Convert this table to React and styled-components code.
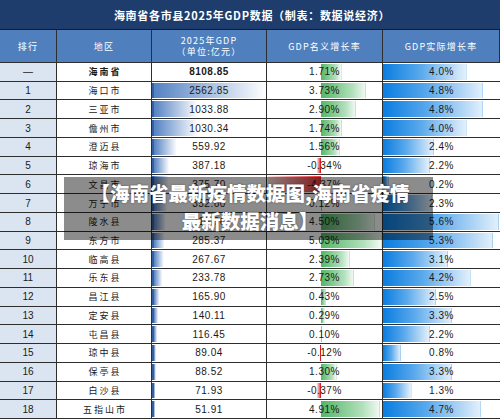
import React from 'react';
import styled, { createGlobalStyle } from 'styled-components';

const Global = createGlobalStyle`
  html, body { margin: 0; padding: 0; background: #fff; }
  body { width: 500px; height: 419px; overflow: hidden; font-family: "Noto Sans CJK SC", sans-serif; }
`;

const Page = styled.div`
  position: relative;
  width: 500px;
  height: 419px;
  overflow: hidden;
  display: flex;
  flex-direction: column;
`;

const TitleBar = styled.div`
  height: 30px;
  box-sizing: border-box;
  border-bottom: 1px solid #1b1b1b;
  background: #1f3d6c;
  color: #fff;
  display: flex;
  align-items: center;
  justify-content: center;
  font-size: 11px;
  font-weight: 700;
  letter-spacing: 0.7px;
  padding-left: 4px;
`;

const Table = styled.div`
  flex: 1;
  display: grid;
  grid-template-columns: 57px 95px 115px 116px 117px;
  grid-template-rows: 33px repeat(19, 1fr);
`;

const BaseCell = styled.div`
  box-sizing: border-box;
  border-right: 1px solid #2e2e2e;
  border-bottom: 1px solid #2e2e2e;
  display: flex;
  flex-direction: column;
  align-items: center;
  justify-content: center;
  min-width: 0;
  overflow: hidden;
  white-space: nowrap;
`;

const HeadCell = styled(BaseCell)`
  background: #4f80bd;
  color: #fff;
  font-size: 9px;
  letter-spacing: 1.2px;
  line-height: 11px;
`;

const RankCell = styled(BaseCell)`
  background: #dbe5f1;
  color: #1a1a1a;
  font-family: "Liberation Sans", sans-serif;
  font-size: 10px;
`;

const NameCell = styled(BaseCell)`
  background: #fff;
  color: #1a1a1a;
  font-size: 9px;
  letter-spacing: 2px;
  padding-left: 2px;
  font-weight: ${p => (p.$bold ? 700 : 400)};
`;

const NumCell = styled(BaseCell)`
  background-color: #fff;
  background-repeat: no-repeat;
  color: #1a1a1a;
  font-family: "Liberation Sans", sans-serif;
  font-size: 10px;
  letter-spacing: 0.5px;
  font-weight: ${p => (p.$bold ? 700 : 400)};
`;

const GdpCell = styled(NumCell)`
  background-image: linear-gradient(to right, #34609f 0, #34609f 2px, #5482c3 2px, #ffffff 100%);
  background-size: ${p => p.$w}px calc(100% - 2px);
  background-position: 0 center;
`;

const NomCell = styled(NumCell)`
  background-image: ${p =>
    p.$neg
      ? 'linear-gradient(to left, #d41c22 0, #d41c22 1px, #ea3a3e 1px, #fde3e3 100%)'
      : 'linear-gradient(to right, #52b665 0, #b3e0bc 70%, #f0f9f2 calc(100% - 1px), #c5e6cb calc(100% - 1px))'};
  background-size: ${p => p.$w}px calc(100% - 2px);
  background-position: ${p => p.$x}px center;
`;

const RealCell = styled(NumCell)`
  border-right: none;
  background-image: linear-gradient(to right, #0a7ddf 0, #5aa9ec 45%, #e2effb calc(100% - 1px), #a9d1f3 calc(100% - 1px));
  background-size: ${p => p.$w}px calc(100% - 2px);
  background-position: 0 center;
`;

const Shade = styled.div`
  position: absolute;
  left: 64px;
  top: 177px;
  width: 369px;
  height: 63px;
  background: rgba(0, 0, 0, 0.45);
`;

const Caption = styled.div`
  position: absolute;
  left: 0;
  right: 0;
  top: 179px;
  text-align: center;
  color: #fff;
  font-family: "Noto Sans CJK SC", sans-serif;
  font-size: 19.5px;
  font-weight: 900;
  line-height: 28px;
  letter-spacing: 0;
  text-shadow: 0 0 2px rgba(0, 0, 0, 0.45);
`;

const rows = [
  ['—', '海南省', 8108.85, 1.71, 4.0, true],
  [1, '海口市', 2562.85, 3.73, 4.8],
  [2, '三亚市', 1033.88, 2.9, 4.8],
  [3, '儋州市', 1030.34, 1.74, 4.0],
  [4, '澄迈县', 559.92, 1.56, 2.4],
  [5, '琼海市', 387.18, -0.34, 2.2],
  [6, '文昌市', 375.7, -4.37, 0.2],
  [7, '万宁市', 352.6, 0.12, 2.3],
  [8, '陵水县', 316.96, 4.5, 5.6],
  [9, '东方市', 285.37, 5.03, 5.3],
  [10, '临高县', 267.67, 2.39, 3.1],
  [11, '乐东县', 233.78, 2.73, 4.2],
  [12, '昌江县', 165.9, 0.43, 2.5],
  [13, '定安县', 140.11, 0.29, 3.3],
  [14, '屯昌县', 116.45, 0.1, 2.2],
  [15, '琼中县', 89.04, -0.12, 0.8],
  [16, '保亭县', 88.52, 1.3, 3.3],
  [17, '白沙县', 71.93, -0.37, 1.3],
  [18, '五指山市', 51.91, 4.91, 4.7],
];

const AXIS = 54;
const PER_PCT = 12.1;

export default function App() {
  return (
    <>
      <Global />
      <Page>
        <TitleBar>海南省各市县2025年GDP数据（制表：数据说经济）</TitleBar>
        <Table>
          <HeadCell>排行</HeadCell>
          <HeadCell>地区</HeadCell>
          <HeadCell>
            <span>2025年GDP</span>
            <span>（单位:亿元）</span>
          </HeadCell>
          <HeadCell>GDP名义增长率</HeadCell>
          <HeadCell>GDP实际增长率</HeadCell>
          {rows.map(([rank, name, gdp, nom, real, total]) => {
            const gdpW = total ? 0 : Math.max(3, (gdp / 2562.85) * 114);
            const nomW = Math.abs(nom) * PER_PCT;
            const neg = nom < 0;
            const realW = Math.min(2 + real * 20.4, 116);
            return (
              <React.Fragment key={name}>
                <RankCell>{rank}</RankCell>
                <NameCell $bold={total}>{name}</NameCell>
                <GdpCell $w={gdpW} $bold={total}>{gdp.toFixed(2)}</GdpCell>
                <NomCell $w={nomW} $neg={neg} $x={neg ? AXIS - nomW : AXIS}>
                  {nom.toFixed(2)}%
                </NomCell>
                <RealCell $w={realW}>{real.toFixed(1)}%</RealCell>
              </React.Fragment>
            );
          })}
        </Table>
        <Shade />
        <Caption>
          【海南省最新疫情数据图,海南省疫情
          <br />
          最新数据消息】
        </Caption>
      </Page>
    </>
  );
}
